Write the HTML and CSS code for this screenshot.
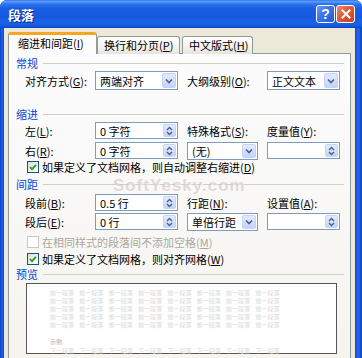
FILE: index.html
```html
<!DOCTYPE html>
<html lang="zh-CN">
<head>
<meta charset="utf-8">
<title>段落</title>
<link rel="stylesheet" href="styles.css">
</head>
<body>
<div class="window">
  <div class="titlebar">
    <span class="title">段落</span>
    <span class="tbtn help">?</span>
    <span class="tbtn close"><svg width="10" height="10" viewBox="0 0 10 10"><path d="M1.5 1.5L8.5 8.5M8.5 1.5L1.5 8.5" stroke="#fff" stroke-width="2" stroke-linecap="square"/></svg></span>
  </div>
  <div class="client">
    <div class="tabs">
      <div class="tab active">缩进和间距(<u>I</u>)</div>
      <div class="tab t2">换行和分页(<u>P</u>)</div>
      <div class="tab t3">中文版式(<u>H</u>)</div>
    </div>
    <div class="panel">
      <div class="gh gh-first"><span>常规</span><i></i></div>
      <div class="row row-first">
        <span class="lbl">对齐方式(<u>G</u>):</span>
        <div class="combo c1 tall"><span class="val">两端对齐</span><b class="btn"><svg width="8" height="6" viewBox="0 0 8 6"><path d="M1 1.5L4 4.5L7 1.5" fill="none" stroke="#4D6185" stroke-width="1.6"/></svg></b></div>
        <span class="lbl c2">大纲级别(<u>O</u>):</span>
        <div class="combo c3 tall"><span class="val">正文文本</span><b class="btn"><svg width="8" height="6" viewBox="0 0 8 6"><path d="M1 1.5L4 4.5L7 1.5" fill="none" stroke="#4D6185" stroke-width="1.6"/></svg></b></div>
      </div>

      <div class="gh gh-indent"><span>缩进</span><i></i></div>
      <div class="row">
        <span class="lbl">左(<u>L</u>):</span>
        <div class="spin c1"><span class="val">0 字符</span><b class="btn sbtn"><svg width="7" height="10" viewBox="0 0 7 10"><path d="M1 4L3.5 1.5L6 4M1 6L3.5 8.5L6 6" fill="none" stroke="#4D6185" stroke-width="1.4"/></svg></b></div>
        <span class="lbl c2">特殊格式(<u>S</u>):</span>
        <span class="lbl c3">度量值(<u>Y</u>):</span>
      </div>
      <div class="row row-gap">
        <span class="lbl">右(<u>R</u>):</span>
        <div class="spin c1"><span class="val">0 字符</span><b class="btn sbtn"><svg width="7" height="10" viewBox="0 0 7 10"><path d="M1 4L3.5 1.5L6 4M1 6L3.5 8.5L6 6" fill="none" stroke="#4D6185" stroke-width="1.4"/></svg></b></div>
        <div class="combo c2"><span class="val">(无)</span><b class="btn"><svg width="8" height="6" viewBox="0 0 8 6"><path d="M1 1.5L4 4.5L7 1.5" fill="none" stroke="#4D6185" stroke-width="1.6"/></svg></b></div>
        <div class="spin c3"><span class="val"></span><b class="btn sbtn"><svg width="7" height="10" viewBox="0 0 7 10"><path d="M1 4L3.5 1.5L6 4M1 6L3.5 8.5L6 6" fill="none" stroke="#4D6185" stroke-width="1.4"/></svg></b></div>
      </div>
      <div class="cbrow cb-indent">
        <span class="cb"><svg width="10" height="10" viewBox="0 0 10 10"><path d="M2 5L4 7.2L8 2.8" fill="none" stroke="#21A121" stroke-width="1.8"/></svg></span>
        <span>如果定义了文档网格，则自动调整右缩进(<u>D</u>)</span>
      </div>

      <div class="gh gh-spacing"><span>间距</span><i></i></div>
      <div class="row row-before">
        <span class="lbl">段前(<u>B</u>):</span>
        <div class="spin c1"><span class="val">0.5 行</span><b class="btn sbtn"><svg width="7" height="10" viewBox="0 0 7 10"><path d="M1 4L3.5 1.5L6 4M1 6L3.5 8.5L6 6" fill="none" stroke="#4D6185" stroke-width="1.4"/></svg></b></div>
        <span class="lbl c2">行距(<u>N</u>):</span>
        <span class="lbl c3">设置值(<u>A</u>):</span>
      </div>
      <div class="row">
        <span class="lbl">段后(<u>E</u>):</span>
        <div class="spin c1"><span class="val">0 行</span><b class="btn sbtn"><svg width="7" height="10" viewBox="0 0 7 10"><path d="M1 4L3.5 1.5L6 4M1 6L3.5 8.5L6 6" fill="none" stroke="#4D6185" stroke-width="1.4"/></svg></b></div>
        <div class="combo c2"><span class="val">单倍行距</span><b class="btn"><svg width="8" height="6" viewBox="0 0 8 6"><path d="M1 1.5L4 4.5L7 1.5" fill="none" stroke="#4D6185" stroke-width="1.6"/></svg></b></div>
        <div class="spin c3"><span class="val"></span><b class="btn sbtn"><svg width="7" height="10" viewBox="0 0 7 10"><path d="M1 4L3.5 1.5L6 4M1 6L3.5 8.5L6 6" fill="none" stroke="#4D6185" stroke-width="1.4"/></svg></b></div>
      </div>
      <div class="cbrow disabled cb-dis">
        <span class="cb"></span>
        <span>在相同样式的段落间不添加空格(<u>M</u>)</span>
      </div>
      <div class="cbrow cb-grid">
        <span class="cb"><svg width="10" height="10" viewBox="0 0 10 10"><path d="M2 5L4 7.2L8 2.8" fill="none" stroke="#21A121" stroke-width="1.8"/></svg></span>
        <span>如果定义了文档网格，则对齐网格(<u>W</u>)</span>
      </div>

      <div class="gh gh-preview"><span>预览</span><i></i></div>
      <div class="preview">
        <p class="pl">前一段落 前一段落 前一段落 前一段落 前一段落 前一段落 前一段落 前一段落</p>
        <p class="pl">前一段落 前一段落 前一段落 前一段落 前一段落 前一段落 前一段落 前一段落</p>
        <p class="pl">前一段落 前一段落 前一段落 前一段落 前一段落 前一段落 前一段落 前一段落</p>
        <p class="pl">前一段落 前一段落 前一段落 前一段落 前一段落 前一段落 前一段落 前一段落</p>
        <p class="pl">前一段落 前一段落 前一段落 前一段落 前一段落 前一段落 前一段落 前一段落</p>
        <p class="sample">示例</p>
        <p class="pl next">下一段落 下一段落 下一段落 下一段落 下一段落 下一段落 下一段落 下一段落</p>
      </div>
      <span class="watermark">SoftYesky.com</span>
    </div>
  </div>
</div>
</body>
</html>
```

FILE: styles.css
```css
* { box-sizing: border-box; margin: 0; padding: 0; }
html, body { width: 362px; height: 358px; overflow: hidden; background: #fff; }
body {
  font-family: "Noto Sans CJK SC", "Liberation Sans", sans-serif;
  font-size: 11px;
  color: #000;
}
u { text-decoration: underline; }

.window {
  width: 362px;
  height: 358px;
  display: flex;
  flex-direction: column;
  border-radius: 7px 7px 0 0;
  overflow: hidden;
  background: linear-gradient(to right, #0A3FCF 0, #1F63E8 2px, #0A45D6 4px, #0A45D6 355px, #2A6AEA 358px, #0B3CC9 362px);
}

.titlebar {
  height: 28px;
  flex: none;
  display: flex;
  align-items: center;
  padding: 0 7px 0 8px;
  background: linear-gradient(to bottom, #2F7BF5 0%, #5C9BFA 6%, #2E74F0 14%, #1A5FE2 30%, #1658DE 60%, #1B63E6 80%, #155BDD 92%, #0B45C0 100%);
}
.title {
  flex: 1;
  color: #fff;
  font-weight: bold;
  font-size: 13px;
  text-shadow: 1px 1px 0 #0A2C9A;
}
.tbtn {
  width: 19px;
  height: 18px;
  border: 1px solid #fff;
  border-radius: 3px;
  display: flex;
  align-items: center;
  justify-content: center;
  margin-left: 1px;
}
.help {
  background: linear-gradient(135deg, #6B9BF7 0%, #3C74EA 45%, #2457D8 100%);
  color: #fff;
  font: bold 14px "Liberation Sans", sans-serif;
}
.close {
  background: linear-gradient(135deg, #F08A6A 0%, #E05A35 45%, #C8421E 100%);
}

.client {
  flex: 1;
  margin: 0 7px 0 4px;
  background: #ECE9D8;
  padding: 4px 0 0 4px;
  display: flex;
  flex-direction: column;
}

.tabs {
  height: 22px;
  display: flex;
  align-items: flex-end;
  position: relative;
  z-index: 1;
  margin-bottom: -1px;
}
.tab {
  height: 18px;
  border: 1px solid #919B9C;
  border-bottom: none;
  border-radius: 3px 3px 0 0;
  background: linear-gradient(#FFFFFF, #F0EFEA 70%, #E6E4DB);
  line-height: 16px;
  padding-left: 6px;
  white-space: nowrap;
}
.tab.active {
  width: 89px;
  height: 22px;
  padding-left: 9px;
  border-top: 3px solid #F5A623;
  background: #FCFCFE;
  line-height: 17px;
}
.tab.t2 { width: 83px; }
.tab.t3 { width: 71px; margin-left: 2px; }

.panel {
  position: relative;
  width: 343px;
  flex: 1;
  border: 1px solid #919B9C;
  border-bottom: none;
  background: linear-gradient(#FCFCFE, #F5F4EF);
  display: flex;
  flex-direction: column;
}

.gh {
  height: 14px;
  display: flex;
  align-items: center;
  padding-left: 7px;
  color: #0046D5;
  line-height: 14px;
}
.gh i {
  flex: 1;
  height: 1px;
  background: #D0D0BF;
  margin: 1px 6px 0 5px;
}
.gh-first { margin-top: 2px; }
.gh-indent { margin-top: 17px; }
.gh-spacing { margin-top: 4px; }
.gh-preview { margin-top: 1px; }

.row {
  height: 19px;
  display: flex;
  align-items: center;
  padding-left: 16px;
}
.row-first { margin-top: 1px; }
.row-gap { margin-top: 1px; }
.row-before { margin-top: 2px; }

.lbl { width: 70px; white-space: nowrap; line-height: 14px; }
.c1 { width: 83px; }
.c2 { width: 71px; margin-left: 9px; }
.c3 { width: 73px; margin-left: 9px; }
.lbl.c2, .lbl.c3 { width: auto; }
.lbl.c2 { min-width: 71px; }

.combo, .spin {
  height: 17px;
  border: 1px solid #7F9DB9;
  background: #fff;
  display: flex;
  align-items: center;
  justify-content: space-between;
  padding-left: 4px;
}
.combo { height: 18px; }
.combo.tall { height: 19px; }
.val { line-height: 14px; white-space: nowrap; }
.btn {
  width: 14px;
  height: calc(100% - 2px);
  margin-right: 1px;
  border: 1px solid #C3D3FD;
  border-radius: 2px;
  background: linear-gradient(#E3EBFD, #C3D4FA);
  display: flex;
  align-items: center;
  justify-content: center;
}
.sbtn { width: 13px; }

.cbrow {
  display: flex;
  align-items: center;
  padding-left: 18px;
  height: 14px;
  line-height: 14px;
  white-space: nowrap;
}
.cb-indent { height: 13px; }
.cb-dis { margin-top: 4px; }
.cb-grid { margin-top: 3px; }
.cb {
  width: 12px;
  height: 12px;
  border: 1px solid #1C5180;
  background: linear-gradient(135deg, #DCDCD7, #FFFFFF);
  margin-right: 3px;
  display: flex;
  align-items: center;
  justify-content: center;
}
.disabled { color: #ACA899; }
.disabled .cb { border-color: #CAC8BB; background: #fff; }

.preview {
  margin: 2px 0 0 17px;
  width: 311px;
  height: 71px;
  border: 1px solid #555;
  background: #fff;
  padding: 5px 0 0 23px;
}
.pl {
  font-size: 6px;
  line-height: 8px;
  color: #D8D8D8;
  white-space: nowrap;
  word-spacing: 4px;
}
.sample {
  font-size: 6px;
  line-height: 8px;
  color: #A8A8A8;
  margin-top: 9px;
}
.pl.next { margin-top: 1px; }

.watermark {
  position: absolute;
  left: 104px;
  top: 124px;
  font: bold 17px/15px "Liberation Sans", sans-serif;
  color: rgba(200, 180, 186, 0.5);
  text-shadow: 1px 1px 0 rgba(255, 255, 255, 0.6);
  letter-spacing: 1px;
  pointer-events: none;
}
```
